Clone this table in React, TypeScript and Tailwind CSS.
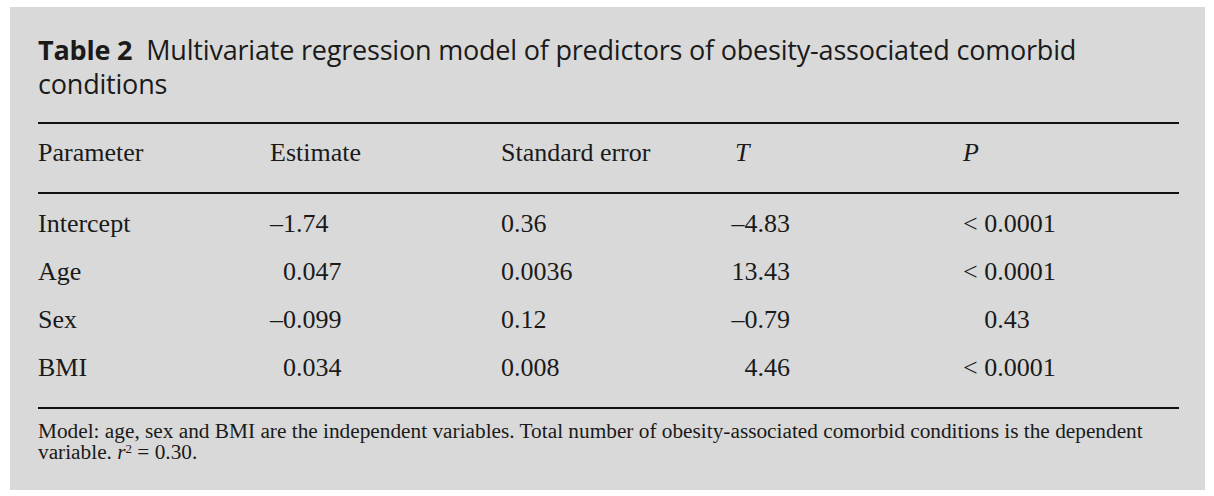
const rows = [
  { name: "Intercept", est: "–1.74", se: "0.36", t: "–4.83", p: "< 0.0001" },
  { name: "Age", est: "0.047", se: "0.0036", t: "13.43", p: "< 0.0001" },
  { name: "Sex", est: "–0.099", se: "0.12", t: "–0.79", p: "0.43" },
  { name: "BMI", est: "0.034", se: "0.008", t: "4.46", p: "< 0.0001" },
];

const serif = "font-['Liberation_Serif','Times_New_Roman',serif]";

function Signed({ value }: { value: string }) {
  // keep decimals lined up: positive values get an invisible dash
  if (value.startsWith("–")) return <span>{value}</span>;
  return (
    <span>
      <span className="invisible">–</span>
      {value}
    </span>
  );
}

function PValue({ value }: { value: string }) {
  if (value.startsWith("<")) return <span>{value}</span>;
  return (
    <span>
      <span className="invisible">{"< "}</span>
      {value}
    </span>
  );
}

export default function App() {
  return (
    <div className="min-h-screen bg-white pt-[7px] pl-[10px]">
      <div className="w-[1195px] h-[483px] bg-[#d9d9d9] pl-[28px] pr-[26px] pt-[26px] text-[#1a1a1a]">
        <h1 className="font-['Open_Sans','Noto_Sans',sans-serif] text-[27px] leading-[34px] tracking-[-0.2px] pr-[80px]">
          <span className="font-bold mr-[14px]">Table 2</span>
          Multivariate regression model of predictors of obesity-associated comorbid conditions
        </h1>

        <div className={`${serif} text-[26px] mt-[21px]`}>
          <div className="border-t-2 border-b-2 border-[#111] pt-[14px] pb-[24px] leading-[30px] grid grid-cols-[232px_231px_234px_228px_1fr]">
            <div>Parameter</div>
            <div>Estimate</div>
            <div>Standard error</div>
            <div className="italic">T</div>
            <div className="italic">P</div>
          </div>

          <div className="pt-[6px] pb-[15px] border-b-2 border-[#111]">
            {rows.map((r) => (
              <div
                key={r.name}
                className="h-[48px] leading-[48px] grid grid-cols-[232px_231px_234px_228px_1fr] whitespace-nowrap"
              >
                <div>{r.name}</div>
                <div>
                  <Signed value={r.est} />
                </div>
                <div>{r.se}</div>
                <div>
                  <div className="w-[62px] -ml-[7px] text-right">{r.t}</div>
                </div>
                <div>
                  <PValue value={r.p} />
                </div>
              </div>
            ))}
          </div>

          <p className="text-[21.3px] leading-[21px] pt-[12px]">
            Model: age, sex and BMI are the independent variables. Total number of obesity-associated comorbid
            conditions is the dependent variable. <i>r</i>
            <sup className="text-[13px]">2</sup> = 0.30.
          </p>
        </div>
      </div>
    </div>
  );
}
